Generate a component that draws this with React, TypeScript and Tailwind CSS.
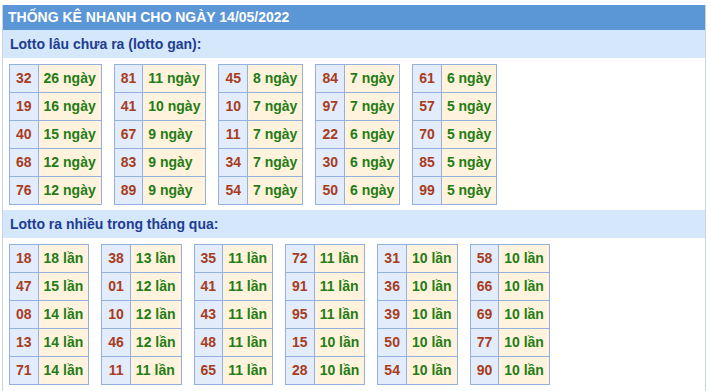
import React from 'react';

type Cell = [string, string];

const ganTables: Cell[][] = [
  [['32', '26 ngày'], ['19', '16 ngày'], ['40', '15 ngày'], ['68', '12 ngày'], ['76', '12 ngày']],
  [['81', '11 ngày'], ['41', '10 ngày'], ['67', '9 ngày'], ['83', '9 ngày'], ['89', '9 ngày']],
  [['45', '8 ngày'], ['10', '7 ngày'], ['11', '7 ngày'], ['34', '7 ngày'], ['54', '7 ngày']],
  [['84', '7 ngày'], ['97', '7 ngày'], ['22', '6 ngày'], ['30', '6 ngày'], ['50', '6 ngày']],
  [['61', '6 ngày'], ['57', '5 ngày'], ['70', '5 ngày'], ['85', '5 ngày'], ['99', '5 ngày']],
];

const hotTables: Cell[][] = [
  [['18', '18 lần'], ['47', '15 lần'], ['08', '14 lần'], ['13', '14 lần'], ['71', '14 lần']],
  [['38', '13 lần'], ['01', '12 lần'], ['10', '12 lần'], ['46', '12 lần'], ['11', '11 lần']],
  [['35', '11 lần'], ['41', '11 lần'], ['43', '11 lần'], ['48', '11 lần'], ['65', '11 lần']],
  [['72', '11 lần'], ['91', '11 lần'], ['95', '11 lần'], ['15', '10 lần'], ['28', '10 lần']],
  [['31', '10 lần'], ['36', '10 lần'], ['39', '10 lần'], ['50', '10 lần'], ['54', '10 lần']],
  [['58', '10 lần'], ['66', '10 lần'], ['69', '10 lần'], ['77', '10 lần'], ['90', '10 lần']],
];

function StatTable({ rows }: { rows: Cell[] }) {
  return (
    <div className="inline-grid grid-cols-[auto_auto] border-l border-t border-[#93b0de]">
      {rows.map(([num, val]) => (
        <React.Fragment key={num + val}>
          <div className="h-[28px] flex items-center justify-center px-[6px] border-r border-b border-[#93b0de] bg-[#e2ecfa] text-[#a83c1e]">
            {num}
          </div>
          <div className="h-[28px] flex items-center px-[5px] border-r border-b border-[#93b0de] bg-[#fff3de] text-[#247c14]">
            {val}
          </div>
        </React.Fragment>
      ))}
    </div>
  );
}

function Section({ title, tables, className }: { title: string; tables: Cell[][]; className?: string }) {
  return (
    <div className={className}>
      <div className="h-[28px] flex items-center pl-[7px] bg-[#d5e7fb] text-[#1d3d92] text-[14px] font-bold">
        {title}
      </div>
      <div className="flex items-start gap-[12px] pl-[6px] mt-[6px] text-[14px] font-bold">
        {tables.map((rows, i) => (
          <StatTable key={i} rows={rows} />
        ))}
      </div>
    </div>
  );
}

export default function App() {
  return (
    <div className="w-[711px] h-[391px] bg-white overflow-hidden" style={{ fontFamily: '"Liberation Sans", Arial, sans-serif' }}>
      <div className="mt-[5px] ml-[2px] w-[704px] h-[386px] border-x border-[#c6d4e2]">
        <div className="h-[25px] flex items-center pl-[5px] bg-[#5b96d6] text-white text-[14px] font-bold">
          THỐNG KÊ NHANH CHO NGÀY 14/05/2022
        </div>
        <Section title="Lotto lâu chưa ra (lotto gan):" tables={ganTables} />
        <Section title="Lotto ra nhiều trong tháng qua:" tables={hotTables} className="mt-[5px]" />
      </div>
    </div>
  );
}
